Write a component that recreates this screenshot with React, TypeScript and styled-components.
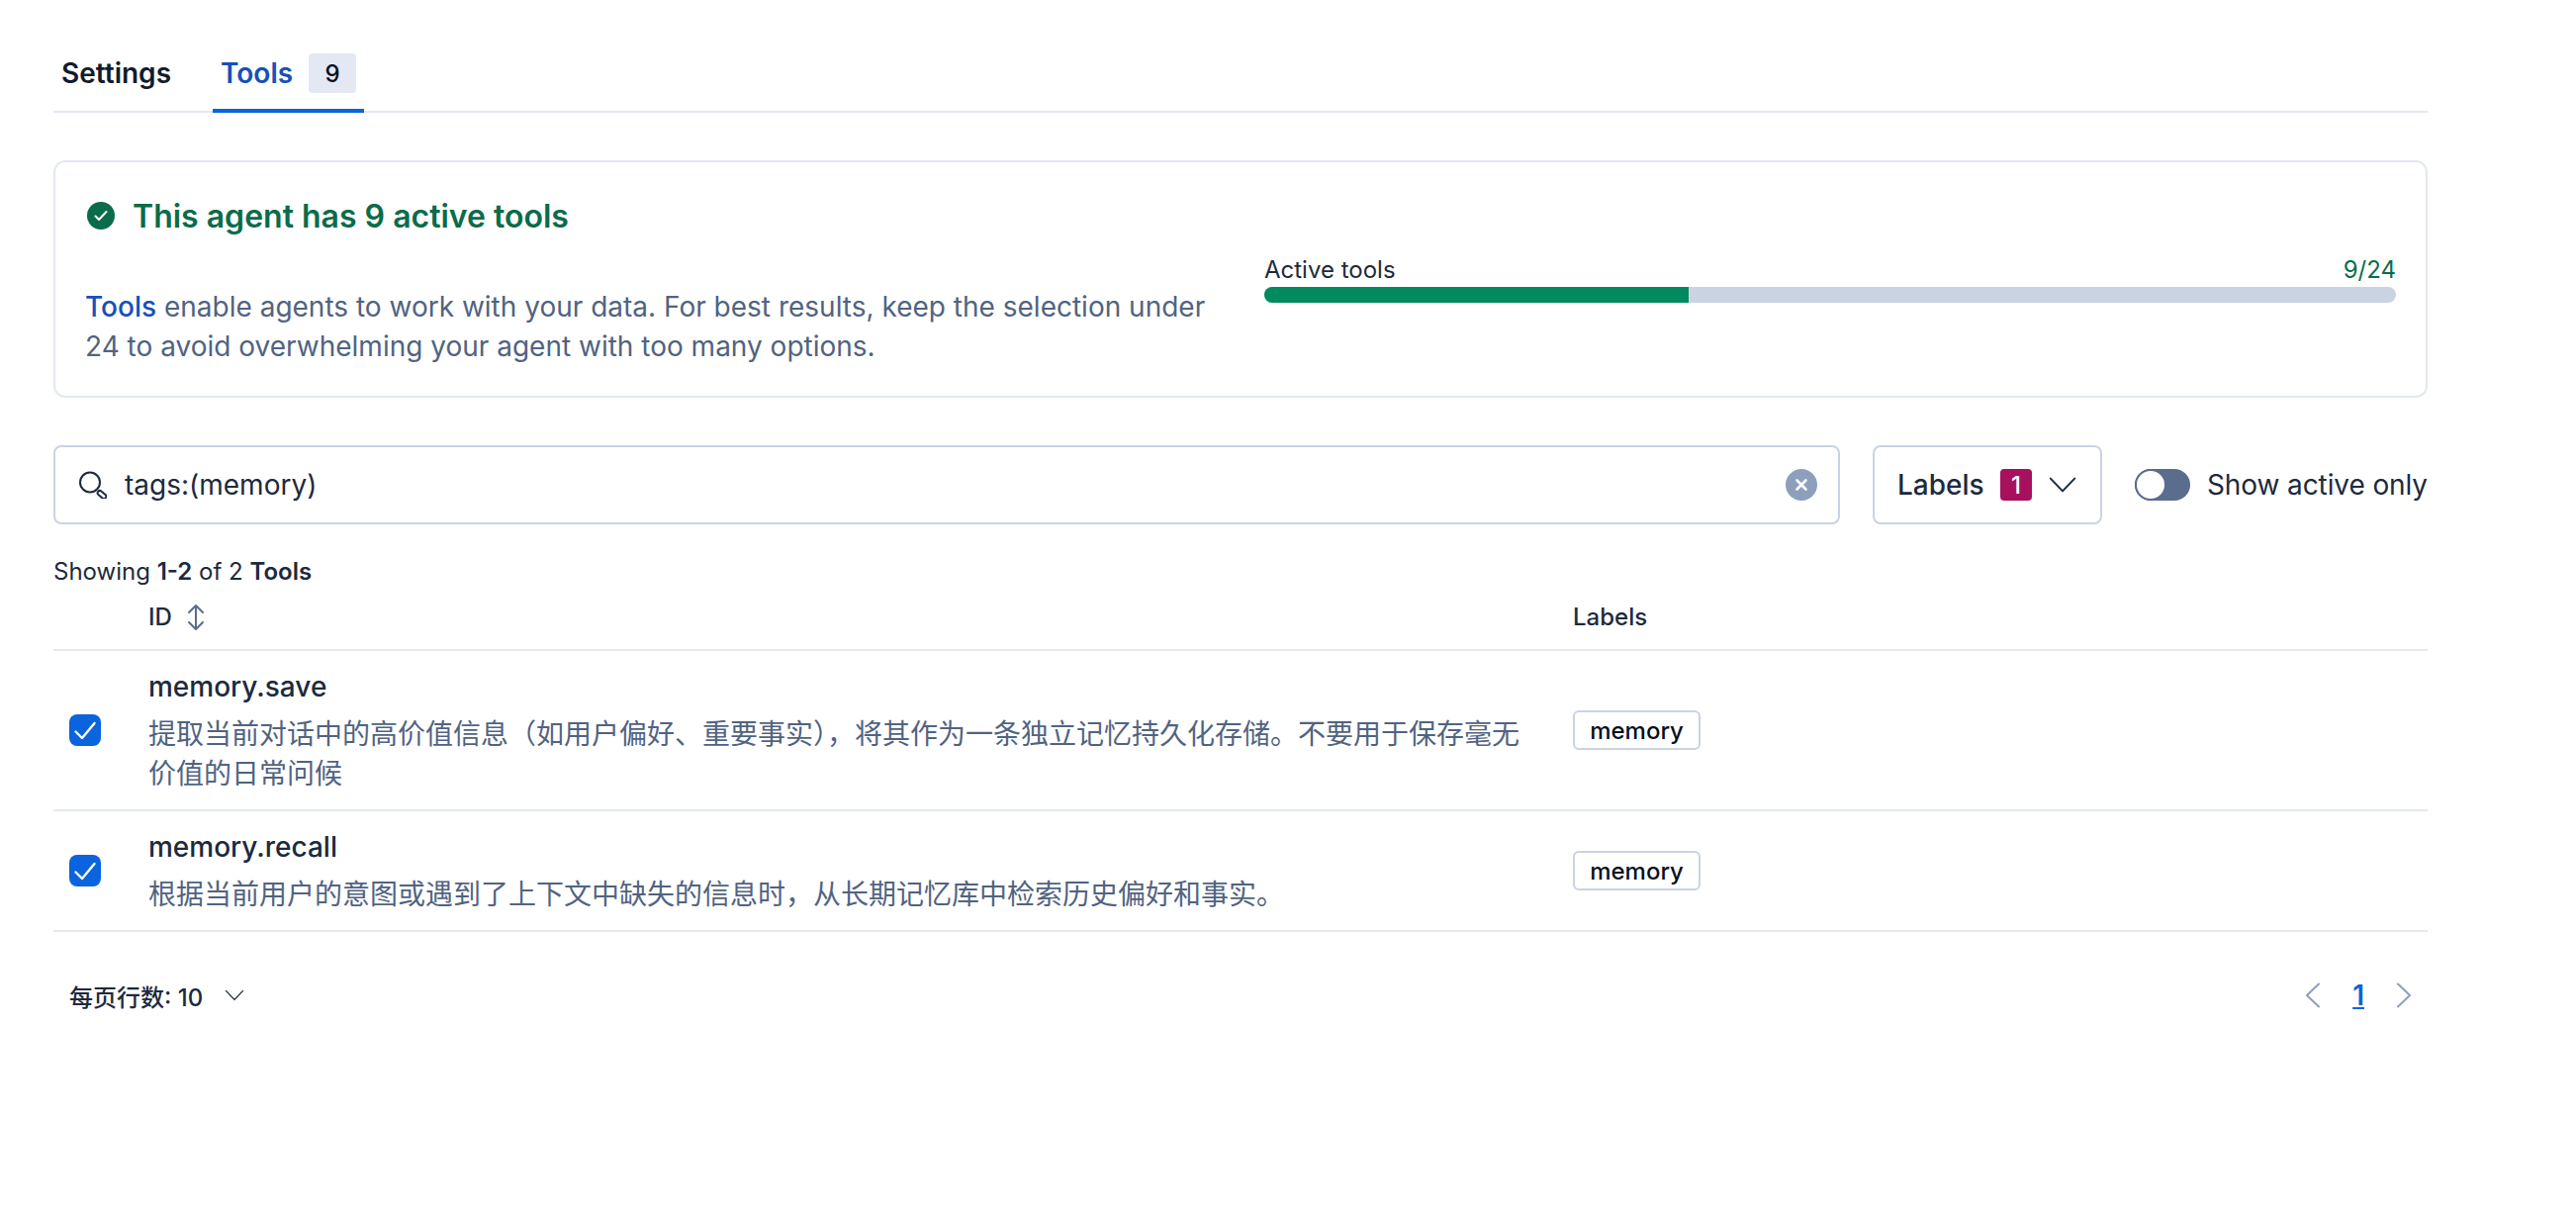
import styled, { createGlobalStyle } from "styled-components";

const GlobalStyle = createGlobalStyle`
  html, body {
    margin: 0;
    padding: 0;
    background: #ffffff;
  }
  body {
    font-family: Inter, "Noto Sans CJK SC", sans-serif;
    color: #1d2a3e;
  }
`;

const Page = styled.div`
  width: 2400px;
  padding: 54px 150px 0 54px;
`;

const TabBar = styled.div`
  display: flex;
  box-sizing: border-box;
  height: 60px;
  border-bottom: 2px solid #e3e8f2;
`;

const Tab = styled.div<{ $active?: boolean }>`
  display: flex;
  align-items: center;
  gap: 16px;
  box-sizing: border-box;
  height: 60px;
  margin-right: 34px;
  padding: 0 8px 16px;
  font-size: 28px;
  font-weight: 600;
  color: ${(p) => (p.$active ? "#1750ba" : "#111c2c")};
  border-bottom: 4px solid ${(p) => (p.$active ? "#0b64dd" : "transparent")};
`;

const TabCount = styled.span`
  display: flex;
  align-items: center;
  justify-content: center;
  width: 48px;
  height: 40px;
  border-radius: 4px;
  background: #e3e8f2;
  font-size: 24px;
  font-weight: 500;
  color: #07101f;
`;

const Callout = styled.section`
  display: grid;
  grid-template-columns: 1144px 1144px;
  grid-template-rows: 48px auto;
  justify-content: space-between;
  box-sizing: border-box;
  height: 240px;
  margin-top: 48px;
  padding: 30px 30px 0;
  border: 2px solid #e3e8f2;
  border-radius: 12px;
`;

const CalloutTitle = styled.h2`
  grid-column: 1 / 3;
  display: flex;
  align-items: center;
  gap: 18px;
  margin: 0 0 0 2px;
  font-size: 32px;
  font-weight: 600;
  color: #0a6c4a;
`;

const CalloutText = styled.p`
  margin: 48px 0 0;
  font-size: 28px;
  line-height: 40px;
  color: #516381;
`;

const Link = styled.span`
  color: #1750ba;
  font-weight: 500;
`;

const Meter = styled.div`
  margin-top: 13px;
`;

const MeterLabels = styled.div`
  display: flex;
  justify-content: space-between;
  height: 35px;
  align-items: center;
  font-size: 24px;
`;

const MeterValue = styled.span`
  color: #0a6c4a;
`;

const MeterTrack = styled.div`
  height: 16px;
  border-radius: 8px;
  background: #cad3e2;
  overflow: hidden;
`;

const MeterFill = styled.div`
  height: 100%;
  background: #008a5e;
`;

const Filters = styled.div`
  display: flex;
  align-items: center;
  margin-top: 48px;
  height: 80px;
`;

const SearchBox = styled.div`
  flex: 1;
  display: flex;
  align-items: center;
  box-sizing: border-box;
  height: 80px;
  padding: 0 21px 0 24px;
  border: 2px solid #cad3e2;
  border-radius: 8px;
`;

const SearchText = styled.span`
  flex: 1;
  margin-left: 18px;
  font-size: 28px;
`;

const LabelsButton = styled.div`
  display: flex;
  align-items: center;
  box-sizing: border-box;
  width: 232px;
  height: 80px;
  margin-left: 33px;
  padding: 0 22px 0 23px;
  border: 2px solid #cad3e2;
  border-radius: 8px;
  font-size: 28px;
  font-weight: 500;
`;

const LabelsCount = styled.span`
  display: flex;
  align-items: center;
  justify-content: center;
  width: 32px;
  height: 32px;
  margin: 0 15px 0 auto;
  border-radius: 4px;
  background: #a6105f;
  color: #ffffff;
  font-size: 24px;
  font-weight: 500;
`;

const Toggle = styled.div`
  position: relative;
  width: 56px;
  height: 32px;
  margin-left: 33px;
  border-radius: 16px;
  background: #5a6d8c;
`;

const ToggleKnob = styled.span`
  position: absolute;
  left: 0;
  top: 0;
  box-sizing: border-box;
  width: 32px;
  height: 32px;
  border: 2px solid #5a6d8c;
  border-radius: 50%;
  background: #ffffff;
`;

const ToggleLabel = styled.span`
  margin-left: 17px;
  font-size: 28px;
  letter-spacing: -0.1px;
  white-space: nowrap;
`;

const Showing = styled.div`
  margin-top: 33px;
  height: 30px;
  line-height: 30px;
  font-size: 24px;
`;

const Strong = styled.b`
  font-weight: 600;
`;

const Row = styled.div<{ $header?: boolean }>`
  display: grid;
  grid-template-columns: 96px 1440px 1fr;
  align-items: center;
  box-sizing: border-box;
  border-bottom: 2px solid #e3e8f2;
  ${(p) => (p.$header ? "height: 65px; padding-bottom: 2px;" : "")}
`;

const HeaderCell = styled.div`
  display: flex;
  align-items: center;
  gap: 14px;
  font-size: 24px;
  font-weight: 500;
`;

const CheckCell = styled.div`
  display: flex;
  padding-left: 16px;
`;

const Checkbox = styled.span`
  display: flex;
  align-items: center;
  justify-content: center;
  width: 32px;
  height: 32px;
  border-radius: 8px;
  background: #0b64dd;
`;

const ToolCell = styled.div`
  padding: 16px 0;
`;

const ToolName = styled.div`
  height: 40px;
  line-height: 40px;
  font-size: 28px;
  font-weight: 500;
`;

const ToolDesc = styled.div`
  margin-top: 8px;
  width: 1400px;
  font-size: 28px;
  line-height: 40px;
  color: #516381;
`;

const Tag = styled.span`
  display: inline-flex;
  align-items: center;
  justify-content: center;
  box-sizing: border-box;
  width: 129px;
  height: 40px;
  border: 2px solid #cad3e2;
  border-radius: 6px;
  font-size: 24px;
  font-weight: 500;
  color: #07101f;
`;

const TagCell = styled.div`
  display: flex;
`;

const Footer = styled.div`
  display: flex;
  align-items: center;
  justify-content: space-between;
  height: 40px;
  margin-top: 44px;
  padding: 0 16px;
`;

const PerPage = styled.div`
  display: flex;
  align-items: center;
  gap: 21px;
  font-size: 24px;
  font-weight: 500;
`;

const Pager = styled.div`
  display: flex;
  align-items: center;
  gap: 32px;
`;

const PageLink = styled.span`
  font-size: 28px;
  font-weight: 600;
  color: #0b64dd;
  text-decoration: underline;
`;

const SearchIcon = () => (
  <svg width="28" height="28" viewBox="0 0 28 28" fill="none" stroke="#1d2a3e" strokeWidth="2">
    <circle cx="11" cy="11.5" r="10" />
    <rect x="18" y="21.7" width="10" height="4.6" rx="2.3" transform="rotate(40 23 24)" />
  </svg>
);

const ClearIcon = () => (
  <svg width="32" height="32" viewBox="0 0 32 32">
    <circle cx="16" cy="16" r="16" fill="#8e9fbc" />
    <path d="M11.5 11.5l9 9M20.5 11.5l-9 9" stroke="#fff" strokeWidth="2.6" strokeLinecap="round" />
  </svg>
);

const Chevron = ({ size }: { size: number }) => (
  <svg width={size} height={size} viewBox="0 0 16 16" fill="none">
    <path d="M1.9 4.8L8 11.2l6.1-6.4" stroke="#1d2a3e" strokeWidth="1" strokeLinecap="round" strokeLinejoin="round" />
  </svg>
);

const PagerArrow = ({ left }: { left?: boolean }) => (
  <svg width="16" height="26" viewBox="0 0 16 26" fill="none">
    <path
      d={left ? "M14 1.5L2 13l12 11.5" : "M2 1.5L14 13 2 24.5"}
      stroke="#8e9fbc"
      strokeWidth="2"
      strokeLinecap="round"
      strokeLinejoin="round"
    />
  </svg>
);

const SortIcon = () => (
  <svg width="20" height="28" viewBox="0 0 20 28" fill="none">
    <path
      d="M3 9L10 2 17 9M10 2V26M3 19L10 26 17 19"
      stroke="#5a6d8c"
      strokeWidth="2"
      strokeLinecap="round"
      strokeLinejoin="round"
    />
  </svg>
);

const CheckMark = () => (
  <svg width="24" height="24" viewBox="0 0 24 24" fill="none">
    <path d="M2.5 13.5L9 20 21.5 5" stroke="#fff" strokeWidth="2.4" strokeLinecap="round" strokeLinejoin="round" />
  </svg>
);

const SuccessIcon = () => (
  <svg width="28" height="28" viewBox="0 0 28 28">
    <circle cx="14" cy="14" r="14" fill="#0a6c4a" />
    <path d="M8.5 14.5l3.5 3.5 7.5-8" stroke="#fff" strokeWidth="2" fill="none" strokeLinecap="round" strokeLinejoin="round" />
  </svg>
);

const tools = [
  {
    name: "memory.save",
    description:
      "提取当前对话中的高价值信息（如用户偏好、重要事实），将其作为一条独立记忆持久化存储。不要用于保存毫无价值的日常问候",
  },
  {
    name: "memory.recall",
    description: "根据当前用户的意图或遇到了上下文中缺失的信息时，从长期记忆库中检索历史偏好和事实。",
  },
];

const App = (): JSX.Element => {
  return (
    <Page>
      <GlobalStyle />
      <TabBar>
        <Tab>Settings</Tab>
        <Tab $active>
          Tools
          <TabCount>9</TabCount>
        </Tab>
      </TabBar>

      <Callout>
        <CalloutTitle>
          <SuccessIcon />
          This agent has 9 active tools
        </CalloutTitle>
        <CalloutText>
          <Link>Tools</Link> enable agents to work with your data. For best results, keep the selection under 24 to
          avoid overwhelming your agent with too many options.
        </CalloutText>
        <Meter>
          <MeterLabels>
            <span>Active tools</span>
            <MeterValue>9/24</MeterValue>
          </MeterLabels>
          <MeterTrack>
            <MeterFill style={{ width: `${(9 / 24) * 100}%` }} />
          </MeterTrack>
        </Meter>
      </Callout>

      <Filters>
        <SearchBox>
          <SearchIcon />
          <SearchText>tags:(memory)</SearchText>
          <ClearIcon />
        </SearchBox>
        <LabelsButton>
          Labels
          <LabelsCount>1</LabelsCount>
          <Chevron size={32} />
        </LabelsButton>
        <Toggle>
          <ToggleKnob />
        </Toggle>
        <ToggleLabel>Show active only</ToggleLabel>
      </Filters>

      <Showing>
        Showing <Strong>1-2</Strong> of 2 <Strong>Tools</Strong>
      </Showing>

      <Row $header>
        <span />
        <HeaderCell>
          ID
          <SortIcon />
        </HeaderCell>
        <HeaderCell>Labels</HeaderCell>
      </Row>
      {tools.map((tool) => (
        <Row key={tool.name}>
          <CheckCell>
            <Checkbox>
              <CheckMark />
            </Checkbox>
          </CheckCell>
          <ToolCell>
            <ToolName>{tool.name}</ToolName>
            <ToolDesc>{tool.description}</ToolDesc>
          </ToolCell>
          <TagCell>
            <Tag>memory</Tag>
          </TagCell>
        </Row>
      ))}

      <Footer>
        <PerPage>
          每页行数: 10
          <Chevron size={22} />
        </PerPage>
        <Pager>
          <PagerArrow left />
          <PageLink>1</PageLink>
          <PagerArrow />
        </Pager>
      </Footer>
    </Page>
  );
};

export default App;
